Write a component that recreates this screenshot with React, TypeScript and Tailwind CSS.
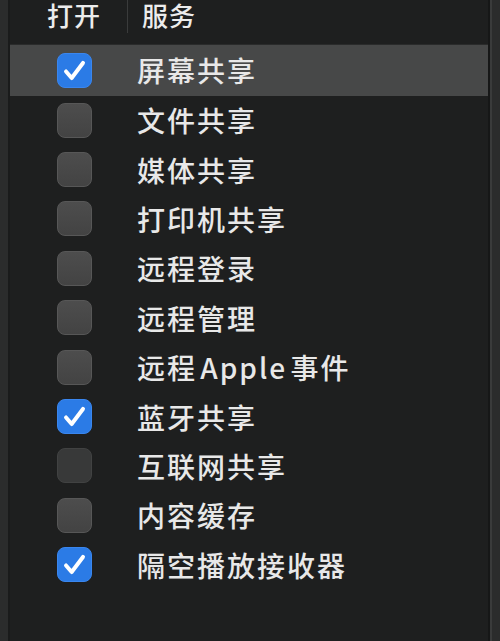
import React from "react";

const rows: { label: string; checked: boolean; dim?: boolean }[] = [
  { label: "屏幕共享", checked: true },
  { label: "文件共享", checked: false },
  { label: "媒体共享", checked: false },
  { label: "打印机共享", checked: false },
  { label: "远程登录", checked: false },
  { label: "远程管理", checked: false },
  { label: "远程 Apple 事件", checked: false },
  { label: "蓝牙共享", checked: true },
  { label: "互联网共享", checked: false, dim: true },
  { label: "内容缓存", checked: false },
  { label: "隔空播放接收器", checked: true },
];

function Box({ checked, dim }: { checked: boolean; dim?: boolean }) {
  if (checked) {
    return (
      <div className="w-[35px] h-[35px] rounded-[8px] bg-[#2b7be6] border border-[#3a86ee] flex items-center justify-center">
        <svg width="35" height="35" viewBox="0 0 35 35">
          <path d="M8.5 18.5 L14.5 25.5 L26.5 9.5" fill="none" stroke="#ffffff" strokeWidth="4.2" strokeLinecap="round" strokeLinejoin="round" />
        </svg>
      </div>
    );
  }
  return (
    <div
      className={
        dim
          ? "w-[35px] h-[35px] rounded-[8px] bg-[#383939] border border-[#414242]"
          : "w-[35px] h-[35px] rounded-[8px] bg-gradient-to-b from-[#4d4d4d] to-[#434343] border border-[#575757]"
      }
    />
  );
}

export default function App() {
  return (
    <div
      className="w-[500px] h-[641px] flex bg-[#2a2b2b] overflow-hidden"
      style={{ fontFamily: '"Noto Sans CJK SC", "Noto Sans", sans-serif' }}
    >
      <div className="w-[8px] bg-[#2b2c2c]" />
      <div className="w-[2px] bg-[#1a1b1b]" />
      <div className="flex-1 flex flex-col bg-[#1e1f1f]">
        <div className="h-[45px] flex items-start border-b border-[#2a2b2b]">
          <div className="w-[118px] h-[33px] flex items-start pt-[1px] border-r border-[#3a3b3b] pl-[37px]">
            <span className="text-[26px] leading-[28px] font-medium text-[#ececec] tracking-[1px]">打开</span>
          </div>
          <div className="h-[33px] flex items-start pt-[1px] pl-[14px]">
            <span className="text-[26px] leading-[28px] font-medium text-[#ececec] tracking-[1px]">服务</span>
          </div>
        </div>
        <div className="flex flex-col">
          {rows.map((r, i) => (
            <div
              key={i}
              className={
                i === 0
                  ? "h-[50.5px] flex items-center bg-[#474848]"
                  : "h-[49.4px] flex items-center"
              }
            >
              <div className="w-[127px] flex pl-[47px]">
                <Box checked={r.checked} dim={r.dim} />
              </div>
              <span className="text-[28px] leading-none font-medium text-[#e8e8e8] tracking-[2px] [word-spacing:-5px]">{r.label}</span>
            </div>
          ))}
        </div>
      </div>
      <div className="w-[2px] bg-[#161717]" />
      <div className="w-[2px] bg-[#3a3b3b]" />
      <div className="flex-1 max-w-[8px] bg-[#2b2c2c]" />
    </div>
  );
}
